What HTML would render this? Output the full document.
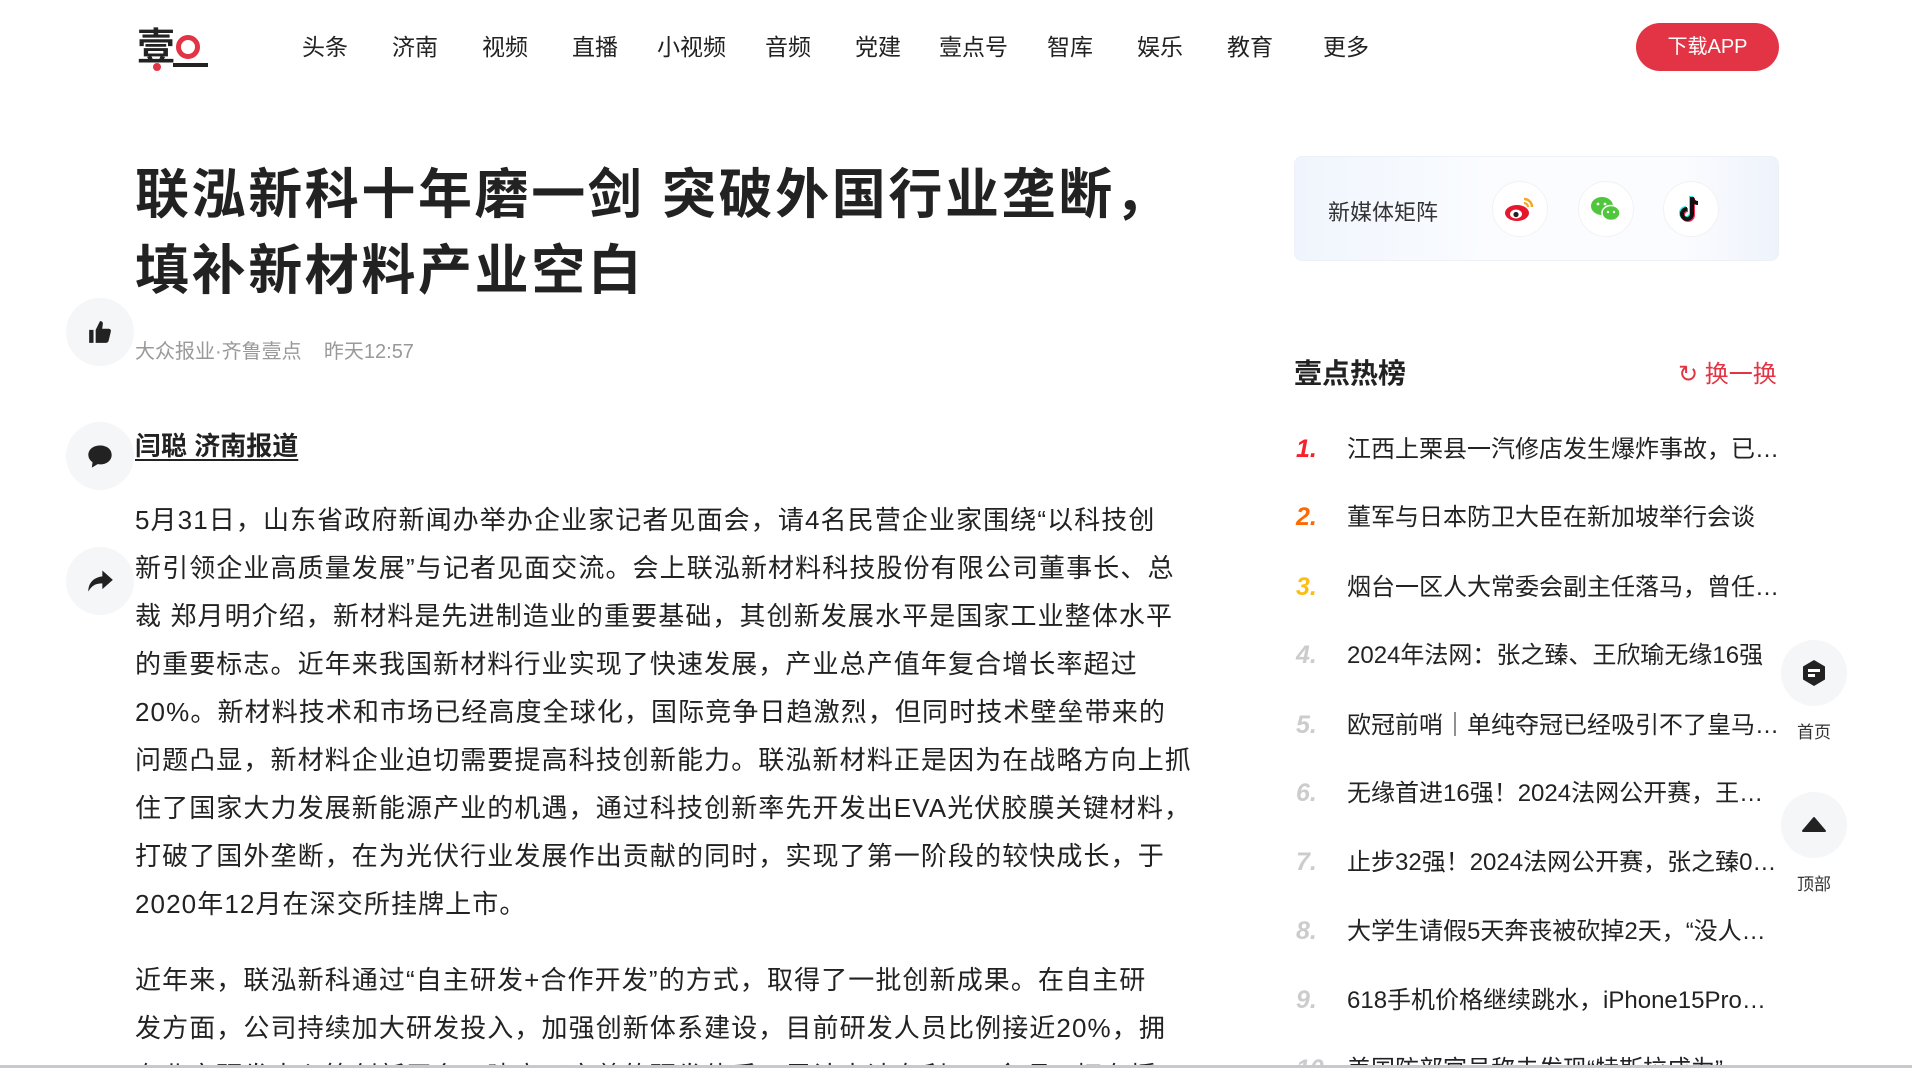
<!DOCTYPE html>
<html><head><meta charset="utf-8"><style>
*{margin:0;padding:0;box-sizing:border-box}
html{width:1912px;height:1068px;overflow:hidden}
body{width:1912px;height:1068px;overflow:hidden;background:#fff;font-family:"Liberation Sans","Noto Sans CJK SC",sans-serif;color:#222;position:relative}
.abs{position:absolute}
.nav{top:33px;font-size:23px;color:#222;white-space:nowrap;line-height:28px}
.btn{left:1636px;top:23px;width:143px;height:48px;border-radius:24px;background:#e23445;color:#fff;font-size:20px;text-align:center;line-height:48px}
.title{left:135px;top:157px;font-size:54px;font-weight:bold;line-height:76px;letter-spacing:2.6px;color:#222;white-space:nowrap}
.meta{left:135px;top:335px;font-size:20px;color:#999;white-space:nowrap}
.circ{width:68px;height:68px;border-radius:50%;background:#f5f6f8;display:flex;align-items:center;justify-content:center}
.author{left:135px;top:426px;font-size:26px;font-weight:bold;text-decoration:underline;text-underline-offset:4px;white-space:nowrap}
.body{left:135px;font-size:26px;line-height:48px;letter-spacing:1.1px;color:#222;white-space:nowrap}
.box{left:1294px;top:156px;width:485px;height:105px;border-radius:8px;background:linear-gradient(90deg,#f0f5fd,#fafcff 40%,#fbfcff 80%,#eef3fb);border:1px solid #eef1f6}
.ic{width:56px;height:56px;border-radius:50%;background:#fff;border:1px solid #f2f2f2;display:flex;align-items:center;justify-content:center}
.hot{left:1294px;top:352px;font-size:28px;font-weight:bold;color:#222}
.chg{left:1678px;top:354px;font-size:24px;color:#e23445;white-space:nowrap}
.li{left:1296px;font-size:24px;line-height:30px;white-space:nowrap;width:480px}
.li b{display:inline-block;width:51px;font-style:italic;font-weight:bold;font-size:25px;color:#ccc}
.li span{color:#222}
.lab{font-size:17px;color:#333;width:66px;text-align:center}
</style></head><body>
<div class="abs" style="left:137px;top:26px;width:80px;height:48px">
 <div class="abs" style="left:0;top:0;font-size:38px;font-weight:bold;color:#222;line-height:44px">壹</div>
 <div class="abs" style="left:39px;top:9px;width:24px;height:24px;border:5px solid #e23445;border-radius:50%"></div>
 <div class="abs" style="left:36px;top:37px;width:35px;height:4px;background:#222"></div>
 <div class="abs" style="left:16px;top:37px;width:8px;height:8px;border-radius:50%;background:#e23445"></div>
</div>
<div class="abs nav" style="left:302px">头条</div>
<div class="abs nav" style="left:392px">济南</div>
<div class="abs nav" style="left:482px">视频</div>
<div class="abs nav" style="left:572px">直播</div>
<div class="abs nav" style="left:657px">小视频</div>
<div class="abs nav" style="left:765px">音频</div>
<div class="abs nav" style="left:855px">党建</div>
<div class="abs nav" style="left:939px">壹点号</div>
<div class="abs nav" style="left:1047px">智库</div>
<div class="abs nav" style="left:1137px">娱乐</div>
<div class="abs nav" style="left:1227px">教育</div>
<div class="abs nav" style="left:1323px">更多</div>
<div class="abs btn">下载APP</div>

<div class="abs title">联泓新科十年磨一剑 突破外国行业垄断，<br>填补新材料产业空白</div>
<div class="abs meta">大众报业·齐鲁壹点&nbsp;&nbsp;&nbsp;&nbsp;昨天12:57</div>

<div class="abs circ" style="left:66px;top:298px"><svg width="26" height="26" viewBox="0 0 24 24"><path fill="#222" d="M2 10h4v12H2zM8 10l4-8c2 0 3 1 2.5 3.5L14 9h6c1.5 0 2.3 1.3 2 2.6l-2 8.4c-.3 1.2-1.2 2-2.4 2H8z"/></svg></div>
<div class="abs circ" style="left:66px;top:422px"><svg width="28" height="26" viewBox="0 0 24 22"><path fill="#222" d="M12 2C6 2 2 5.6 2 10c0 2.6 1.4 4.8 3.6 6.3L5 21l5-3c.6.1 1.3.2 2 .2 6 0 10-3.6 10-8.2S18 2 12 2z"/></svg></div>
<div class="abs circ" style="left:66px;top:547px"><svg width="28" height="26" viewBox="0 0 24 22"><path fill="#222" d="M14 2l9 8-9 8v-5C8 13 5 15 2 20c0-7 4-12 12-13z"/></svg></div>

<div class="abs author">闫聪 济南报道</div>
<div class="abs body" style="top:496px">5月31日，山东省政府新闻办举办企业家记者见面会，请4名民营企业家围绕“以科技创<br>新引领企业高质量发展”与记者见面交流。会上联泓新材料科技股份有限公司董事长、总<br>裁 郑月明介绍，新材料是先进制造业的重要基础，其创新发展水平是国家工业整体水平<br>的重要标志。近年来我国新材料行业实现了快速发展，产业总产值年复合增长率超过<br>20%。新材料技术和市场已经高度全球化，国际竞争日趋激烈，但同时技术壁垒带来的<br>问题凸显，新材料企业迫切需要提高科技创新能力。联泓新材料正是因为在战略方向上抓<br>住了国家大力发展新能源产业的机遇，通过科技创新率先开发出EVA光伏胶膜关键材料，<br>打破了国外垄断，在为光伏行业发展作出贡献的同时，实现了第一阶段的较快成长，于<br>2020年12月在深交所挂牌上市。</div>
<div class="abs body" style="top:956px">近年来，联泓新科通过“自主研发+合作开发”的方式，取得了一批创新成果。在自主研<br>发方面，公司持续加大研发投入，加强创新体系建设，目前研发人员比例接近20%，拥<br>有北京研发中心等创新平台，建立了完善的研发体系，累计申请专利100余项，拥有授</div>

<div class="abs box"></div>
<div class="abs" style="left:1328px;top:195px;font-size:22px;color:#333">新媒体矩阵</div>
<div class="abs ic" style="left:1492px;top:181px"><svg width="32" height="28" viewBox="0 0 32 28"><ellipse cx="13" cy="18" rx="12" ry="8" fill="#e6162d"/><ellipse cx="12" cy="19" rx="6" ry="4.5" fill="#fff"/><circle cx="12" cy="19.5" r="2.6" fill="#222"/><path d="M20 4a8 8 0 0 1 8 8" stroke="#f5a623" stroke-width="2.5" fill="none"/><path d="M20 8a4 4 0 0 1 4 4" stroke="#f5a623" stroke-width="2.2" fill="none"/></svg></div>
<div class="abs ic" style="left:1578px;top:181px"><svg width="32" height="28" viewBox="0 0 32 28"><ellipse cx="12" cy="11" rx="11" ry="9" fill="#50c63c"/><ellipse cx="21" cy="18" rx="9" ry="7.5" fill="#50c63c" stroke="#fff" stroke-width="1.5"/><circle cx="8" cy="9" r="1.4" fill="#fff"/><circle cx="15" cy="9" r="1.4" fill="#fff"/><circle cx="18" cy="17" r="1.2" fill="#fff"/><circle cx="24" cy="17" r="1.2" fill="#fff"/></svg></div>
<div class="abs ic" style="left:1663px;top:181px"><svg width="28" height="30" viewBox="0 0 28 30"><path d="M15 3v17a5 5 0 1 1-5-5" stroke="#25f4ee" stroke-width="4" fill="none" transform="translate(-1,-1)"/><path d="M15 3v17a5 5 0 1 1-5-5" stroke="#fe2c55" stroke-width="4" fill="none" transform="translate(1,1)"/><path d="M15 3v17a5 5 0 1 1-5-5M15 3c0 4 3 6 6 6" stroke="#111" stroke-width="4" fill="none"/></svg></div>

<div class="abs hot">壹点热榜</div>
<div class="abs chg"><span style="font-size:24px">↻</span> 换一换</div>
<div class="abs li" style="top:434px"><b style="color:#f5222d">1.</b><span>江西上栗县一汽修店发生爆炸事故，已…</span></div>
<div class="abs li" style="top:502px"><b style="color:#ff6a00">2.</b><span>董军与日本防卫大臣在新加坡举行会谈</span></div>
<div class="abs li" style="top:572px"><b style="color:#fbbf14">3.</b><span>烟台一区人大常委会副主任落马，曾任…</span></div>
<div class="abs li" style="top:640px"><b>4.</b><span>2024年法网：张之臻、王欣瑜无缘16强</span></div>
<div class="abs li" style="top:710px"><b>5.</b><span>欧冠前哨｜单纯夺冠已经吸引不了皇马…</span></div>
<div class="abs li" style="top:778px"><b>6.</b><span>无缘首进16强！2024法网公开赛，王…</span></div>
<div class="abs li" style="top:847px"><b>7.</b><span>止步32强！2024法网公开赛，张之臻0…</span></div>
<div class="abs li" style="top:916px"><b>8.</b><span>大学生请假5天奔丧被砍掉2天，“没人…</span></div>
<div class="abs li" style="top:985px"><b>9.</b><span>618手机价格继续跳水，iPhone15Pro…</span></div>
<div class="abs li" style="top:1054px"><b>10.</b><span>美国防部官员称未发现“特斯拉成为”…</span></div>

<div class="abs circ" style="left:1781px;top:640px;width:66px;height:66px"><svg width="26" height="28" viewBox="0 0 26 28"><path d="M13 1l11 6.5v13L13 27 2 20.5v-13z" fill="#222"/><rect x="7" y="10" width="12" height="3" fill="#fff"/><rect x="7" y="15" width="7" height="3" fill="#fff"/></svg></div>
<div class="abs lab" style="left:1781px;top:718px">首页</div>
<div class="abs circ" style="left:1781px;top:792px;width:66px;height:66px"><svg width="26" height="18" viewBox="0 0 26 18"><path d="M13 2l11 13H2z" fill="#222" stroke="#222" stroke-width="2" stroke-linejoin="round"/></svg></div>
<div class="abs lab" style="left:1781px;top:870px">顶部</div>
<div class="abs" style="left:0;top:1065px;width:1912px;height:3px;background:#c8c9cf"></div>
</body></html>
